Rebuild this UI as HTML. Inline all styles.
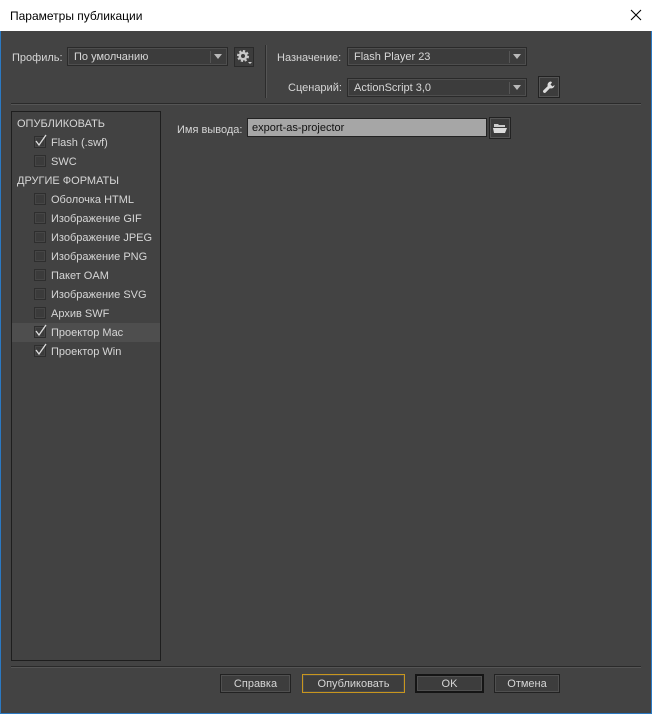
<!DOCTYPE html>
<html><head><meta charset="utf-8"><style>
*{margin:0;padding:0;box-sizing:border-box}
body{width:652px;height:714px;background:#434343;position:relative;overflow:hidden;font-family:"Liberation Sans","DejaVu Sans",sans-serif;font-size:11px;color:#d6d6d6}
.a{position:absolute}
.t{position:absolute;white-space:nowrap}
.dd{position:absolute;background:#3c3c3c;border:1px solid #2a2a2a;box-shadow:inset 0 0 0 1px #4e4e4e;height:19px;color:#d8d8d8;padding:3px 0 0 6px;line-height:12px}
.dd .s{position:absolute;right:16px;top:3px;width:1px;height:12px;background:#555}
.dd .ar{position:absolute;right:5px;top:6px;width:0;height:0;border-left:4px solid transparent;border-right:4px solid transparent;border-top:5px solid #b8b8b8}
.cb{position:absolute;left:34px;width:12px;height:12px;background:#3b3b3b;border:1px solid #2e2e2e;box-shadow:inset 0 0 0 1px #464646}
.btn{position:absolute;top:674px;height:19px;background:#3d3d3d;border:1px solid #222;box-shadow:inset 0 0 0 1px #505050;text-align:center;line-height:18px;color:#d6d6d6}
</style></head><body>
<div class="a" style="left:0;top:0;width:652px;height:31px;background:#fff"></div>
<div class="t" style="left:10px;top:9px;font-size:12px;color:#000">Параметры публикации</div>
<svg class="a" style="left:630px;top:9px" width="12" height="12"><path d="M1 1L11 11M11 1L1 11" stroke="#000" stroke-width="1.1"/></svg>
<div class="a" style="left:0;top:31px;width:1px;height:683px;background:#2b79c2"></div>
<div class="a" style="left:651px;top:31px;width:1px;height:683px;background:#2b79c2"></div>
<div class="a" style="left:0;top:713px;width:652px;height:1px;background:#2b79c2"></div>

<div class="t" style="left:12px;top:52px">Профиль:</div>
<div class="dd" style="left:67px;top:47px;width:161px">По умолчанию<div class="s"></div><div class="ar"></div></div>
<div class="a" style="left:234px;top:47px;width:20px;height:20px;background:#3c3c3c;border:1px solid #2a2a2a"></div>
<svg class="a" style="left:236px;top:49px" width="17" height="17"><circle cx="7" cy="7" r="4.5" fill="#c8c8c8" stroke="#c8c8c8" stroke-width="3" stroke-dasharray="2 1.5"/><circle cx="7" cy="7" r="2" fill="#3c3c3c"/><path d="M12 13h4l-2 2z" fill="#ccc"/></svg>
<div class="a" style="left:265px;top:45px;width:1px;height:53px;background:#2c2c2c"></div>
<div class="a" style="left:266px;top:45px;width:1px;height:53px;background:#555"></div>

<div class="t" style="left:277px;top:52px">Назначение:</div>
<div class="dd" style="left:347px;top:47px;width:180px">Flash Player 23<div class="s"></div><div class="ar"></div></div>
<div class="t" style="left:288px;top:82px">Сценарий:</div>
<div class="dd" style="left:347px;top:78px;width:180px">ActionScript 3,0<div class="s"></div><div class="ar"></div></div>
<div class="a" style="left:538px;top:76px;width:22px;height:22px;background:#3c3c3c;border:1px solid #222;box-shadow:inset 0 0 0 1px #555"></div>
<svg class="a" style="left:542px;top:80px" width="14" height="14"><path d="M9 1.5a3.5 3.5 0 0 0-3.3 4.6L1.5 10.3a1.5 1.5 0 0 0 2.2 2.2l4.2-4.2A3.5 3.5 0 0 0 12.5 5l-2 1.5-2-2 1.5-2z" fill="#ddd"/></svg>

<div class="a" style="left:11px;top:103px;width:630px;height:1px;background:#2a2a2a"></div>
<div class="a" style="left:11px;top:104px;width:630px;height:1px;background:#555"></div>

<div class="a" style="left:11px;top:111px;width:150px;height:550px;border:1px solid #1e1e1e;background:#424242"></div>
<div class="a" style="left:12px;top:323px;width:148px;height:19px;background:#4e4e4e"></div>
<div class="t" style="left:17px;top:118px">ОПУБЛИКОВАТЬ</div>
<div class="t" style="left:17px;top:175px">ДРУГИЕ ФОРМАТЫ</div>

<div class="cb" style="top:136px"></div><div class="t" style="left:51px;top:137px">Flash (.swf)</div>
<div class="cb" style="top:155px"></div><div class="t" style="left:51px;top:156px">SWC</div>
<div class="cb" style="top:193px"></div><div class="t" style="left:51px;top:194px">Оболочка HTML</div>
<div class="cb" style="top:212px"></div><div class="t" style="left:51px;top:213px">Изображение GIF</div>
<div class="cb" style="top:231px"></div><div class="t" style="left:51px;top:232px">Изображение JPEG</div>
<div class="cb" style="top:250px"></div><div class="t" style="left:51px;top:251px">Изображение PNG</div>
<div class="cb" style="top:269px"></div><div class="t" style="left:51px;top:270px">Пакет OAM</div>
<div class="cb" style="top:288px"></div><div class="t" style="left:51px;top:289px">Изображение SVG</div>
<div class="cb" style="top:307px"></div><div class="t" style="left:51px;top:308px">Архив SWF</div>
<div class="cb" style="top:326px"></div><div class="t" style="left:51px;top:327px">Проектор Mac</div>
<div class="cb" style="top:345px"></div><div class="t" style="left:51px;top:346px">Проектор Win</div>
<svg class="a" style="left:33px;top:133px" width="16" height="16"><path d="M3 8l3 4 7-10" stroke="#ddd" stroke-width="1.3" fill="none"/></svg>
<svg class="a" style="left:33px;top:323px" width="16" height="16"><path d="M3 8l3 4 7-10" stroke="#ddd" stroke-width="1.3" fill="none"/></svg>
<svg class="a" style="left:33px;top:342px" width="16" height="16"><path d="M3 8l3 4 7-10" stroke="#ddd" stroke-width="1.3" fill="none"/></svg>

<div class="t" style="left:177px;top:124px">Имя вывода:</div>
<div class="a" style="left:247px;top:118px;width:240px;height:19px;background:#a6a6a6;border:1px solid #222;color:#111;padding:3px 0 0 4px;line-height:12px">export-as-projector</div>
<div class="a" style="left:489px;top:117px;width:22px;height:22px;background:#3c3c3c;border:1px solid #222;box-shadow:inset 0 0 0 1px #555"></div>
<svg class="a" style="left:492px;top:121px" width="16" height="14"><path d="M2 3h4l1 1h6v2H2z" fill="#ccc"/><path d="M1 7h14l-2 5H2z" fill="#ddd"/></svg>

<div class="a" style="left:11px;top:666px;width:630px;height:1px;background:#2a2a2a"></div>
<div class="a" style="left:11px;top:667px;width:630px;height:1px;background:#555"></div>
<div class="btn" style="left:220px;width:71px">Справка</div>
<div class="btn" style="left:302px;width:103px;border-color:#c8961e;box-shadow:inset 0 0 0 1px #4a4a4a">Опубликовать</div>
<div class="btn" style="left:415px;width:69px;border:2px solid #151515;line-height:16px">OK</div>
<div class="btn" style="left:494px;width:66px">Отмена</div>
</body></html>
